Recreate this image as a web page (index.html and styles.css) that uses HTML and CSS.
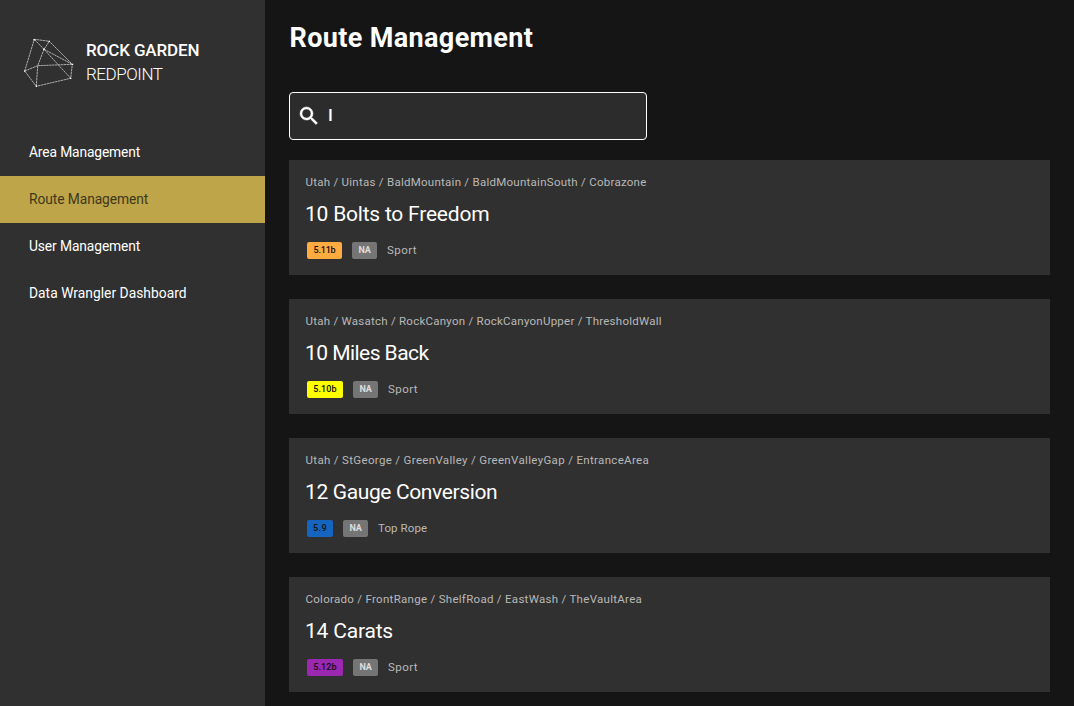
FILE: index.html
```html
<!DOCTYPE html>
<html lang="en">
<head>
<meta charset="utf-8">
<title>Route Management</title>
<link rel="stylesheet" href="styles.css">
</head>
<body>
<div class="app">
  <aside class="sidebar">
    <div class="brand">
      <svg class="brand-mark" width="52" height="52" viewBox="23 37 52 52">
        <path class="brand-lines" d="M34.3 39.3L49.3 41.3L72.3 64.3L70.7 78.3L36.3 86.3L24.7 71ZM34.3 39.3L44 49.3L49.3 41.3M44 49.3L72.3 64.3M44 49.3L70.7 78.3M44 49.3L37.7 65.7L72.3 64.3M24.7 71L37.7 65.7L36.3 86.3"/>
        <path class="brand-dots" d="M33.5 39h1.6v1.4h-1.6zM48.6 40.7h1.4v1.2h-1.4zM43.3 48.6h1.4v1.4h-1.4zM71.6 63.8h1.6v1.2h-1.6zM24 70.4h1.3v1.3h-1.3zM35.7 85.6h1.3v1.3h-1.3zM70 77.7h1.3v1.3h-1.3z"/>
      </svg>
      <div class="brand-text">
        <div class="brand-name">ROCK GARDEN</div>
        <div class="brand-product">REDPOINT</div>
      </div>
    </div>
    <nav class="nav">
      <a class="nav-item nav-area">Area Management</a>
      <a class="nav-item nav-route active">Route Management</a>
      <a class="nav-item nav-user">User Management</a>
      <a class="nav-item nav-data">Data Wrangler Dashboard</a>
    </nav>
  </aside>
  <main class="main">
    <h1 class="page-title">Route Management</h1>
    <div class="search">
      <svg class="search-icon" width="24" height="24" viewBox="0 0 24 24"><path d="M15.5 14h-.79l-.28-.27A6.47 6.47 0 0 0 16 9.5 6.5 6.5 0 1 0 9.5 16c1.61 0 3.09-.59 4.23-1.57l.27.28v.79l5 4.99L20.49 19l-4.99-5zm-6 0C7.01 14 5 11.99 5 9.5S7.01 5 9.5 5 14 7.01 14 9.5 11.99 14 9.5 14z"/></svg>
      <span class="search-text">I</span>
    </div>
    <div class="routes">
      <article class="card card-bolts">
        <div class="crumbs">Utah / Uintas / BaldMountain / BaldMountainSouth / Cobrazone</div>
        <h2 class="name">10 Bolts to Freedom</h2>
        <div class="meta"><span class="badge grade orange">5.11b</span><span class="badge rating">NA</span><span class="kind sport">Sport</span></div>
      </article>
      <article class="card card-miles">
        <div class="crumbs">Utah / Wasatch / RockCanyon / RockCanyonUpper / ThresholdWall</div>
        <h2 class="name">10 Miles Back</h2>
        <div class="meta"><span class="badge grade yellow">5.10b</span><span class="badge rating">NA</span><span class="kind sport">Sport</span></div>
      </article>
      <article class="card card-gauge">
        <div class="crumbs">Utah / StGeorge / GreenValley / GreenValleyGap / EntranceArea</div>
        <h2 class="name">12 Gauge Conversion</h2>
        <div class="meta"><span class="badge grade blue">5.9</span><span class="badge rating">NA</span><span class="kind">Top Rope</span></div>
      </article>
      <article class="card card-carats">
        <div class="crumbs">Colorado / FrontRange / ShelfRoad / EastWash / TheVaultArea</div>
        <h2 class="name">14 Carats</h2>
        <div class="meta"><span class="badge grade purple">5.12b</span><span class="badge rating">NA</span><span class="kind sport">Sport</span></div>
      </article>
    </div>
  </main>
</div>
</body>
</html>
```
FILE: styles.css
```css
* { box-sizing: border-box; }
body {
  margin: 0;
  background: #151515;
  color: #fff;
  font-family: Roboto, "Liberation Sans", sans-serif;
  overflow: hidden;
}
.app { display: flex; height: 706px; }

.sidebar { width: 265px; flex: none; background: #303030; }
.brand { display: flex; height: 129px; padding: 37px 0 0 23px; gap: 11px; }
.brand-mark { flex: none; }
.brand-lines { fill: none; stroke: #c4c4c4; stroke-width: .85; stroke-dasharray: 2.4 .5; }
.brand-dots { fill: #fff; }
.brand-text { padding-top: 1px; font-size: 17px; line-height: 24px; white-space: nowrap; }
.brand-name { font-weight: 500; letter-spacing: -.12px; }
.brand-product { font-weight: 300; letter-spacing: -.45px; }

.nav { display: flex; flex-direction: column; }
.nav-item { height: 47px; padding-left: 29px; font-size: 13.8px; line-height: 46px; white-space: nowrap; }
.nav-area { letter-spacing: -.13px; }
.nav-route { letter-spacing: -.08px; }
.nav-user { letter-spacing: -.1px; }
.nav-data { letter-spacing: .03px; }
.nav-item.active { background: #bfa549; color: #40381a; }

.main { flex: 1; padding: 18px 24px 0; }
.page-title { margin: 0; padding-left: .5px; font-size: 27px; line-height: 41px; font-weight: 700; letter-spacing: .36px; }
.search {
  display: flex;
  align-items: center;
  gap: 7px;
  width: 358px;
  height: 48px;
  margin-top: 33px;
  padding-left: 7px;
  border: 1px solid #fff;
  border-radius: 4px;
  background: #2c2c2c;
}
.search-icon { fill: #fff; stroke: #fff; stroke-width: .5; }
.search-text { padding-bottom: 2px; font-size: 17px; line-height: 24px; font-weight: 500; }

.routes { display: flex; flex-direction: column; gap: 24px; margin-top: 20px; }
.card { height: 115px; padding: 14px 16px 0; background: #303030; }
.crumbs { padding-left: .5px; font-size: 11.5px; line-height: 16px; color: #b8b8b8; white-space: nowrap; }
.name { margin: 10px 0 0; font-size: 21px; line-height: 28px; font-weight: 400; }
.meta { display: flex; align-items: center; height: 17px; margin: 14px 0 0 2px; gap: 10px; }
.badge { height: 17px; border-radius: 2px; font-size: 9px; line-height: 17px; text-align: center; }
.grade { width: 36px; color: #111; font-weight: 500; letter-spacing: .15px; }
.rating { width: 25px; background: #757575; color: #ddd; font-weight: 700; letter-spacing: -.3px; }
.orange { width: 35px; background: #ffab40; letter-spacing: -.2px; }
.yellow { background: #ff0; }
.blue { width: 26px; background: #1565c0; letter-spacing: .4px; }
.purple { background: #9c27b0; }
.kind { font-size: 11.5px; line-height: 17px; color: #b8b8b8; letter-spacing: .1px; }
.sport { letter-spacing: .45px; }

.card-bolts .crumbs { letter-spacing: .262px; }
.card-bolts .name { letter-spacing: -.22px; }
.card-miles .crumbs { letter-spacing: .25px; }
.card-miles .name { letter-spacing: -.55px; }
.card-gauge .crumbs { letter-spacing: .331px; }
.card-gauge .name { letter-spacing: -.373px; }
.card-carats .crumbs { letter-spacing: .29px; }
.card-carats .name { letter-spacing: -.2px; }
```
